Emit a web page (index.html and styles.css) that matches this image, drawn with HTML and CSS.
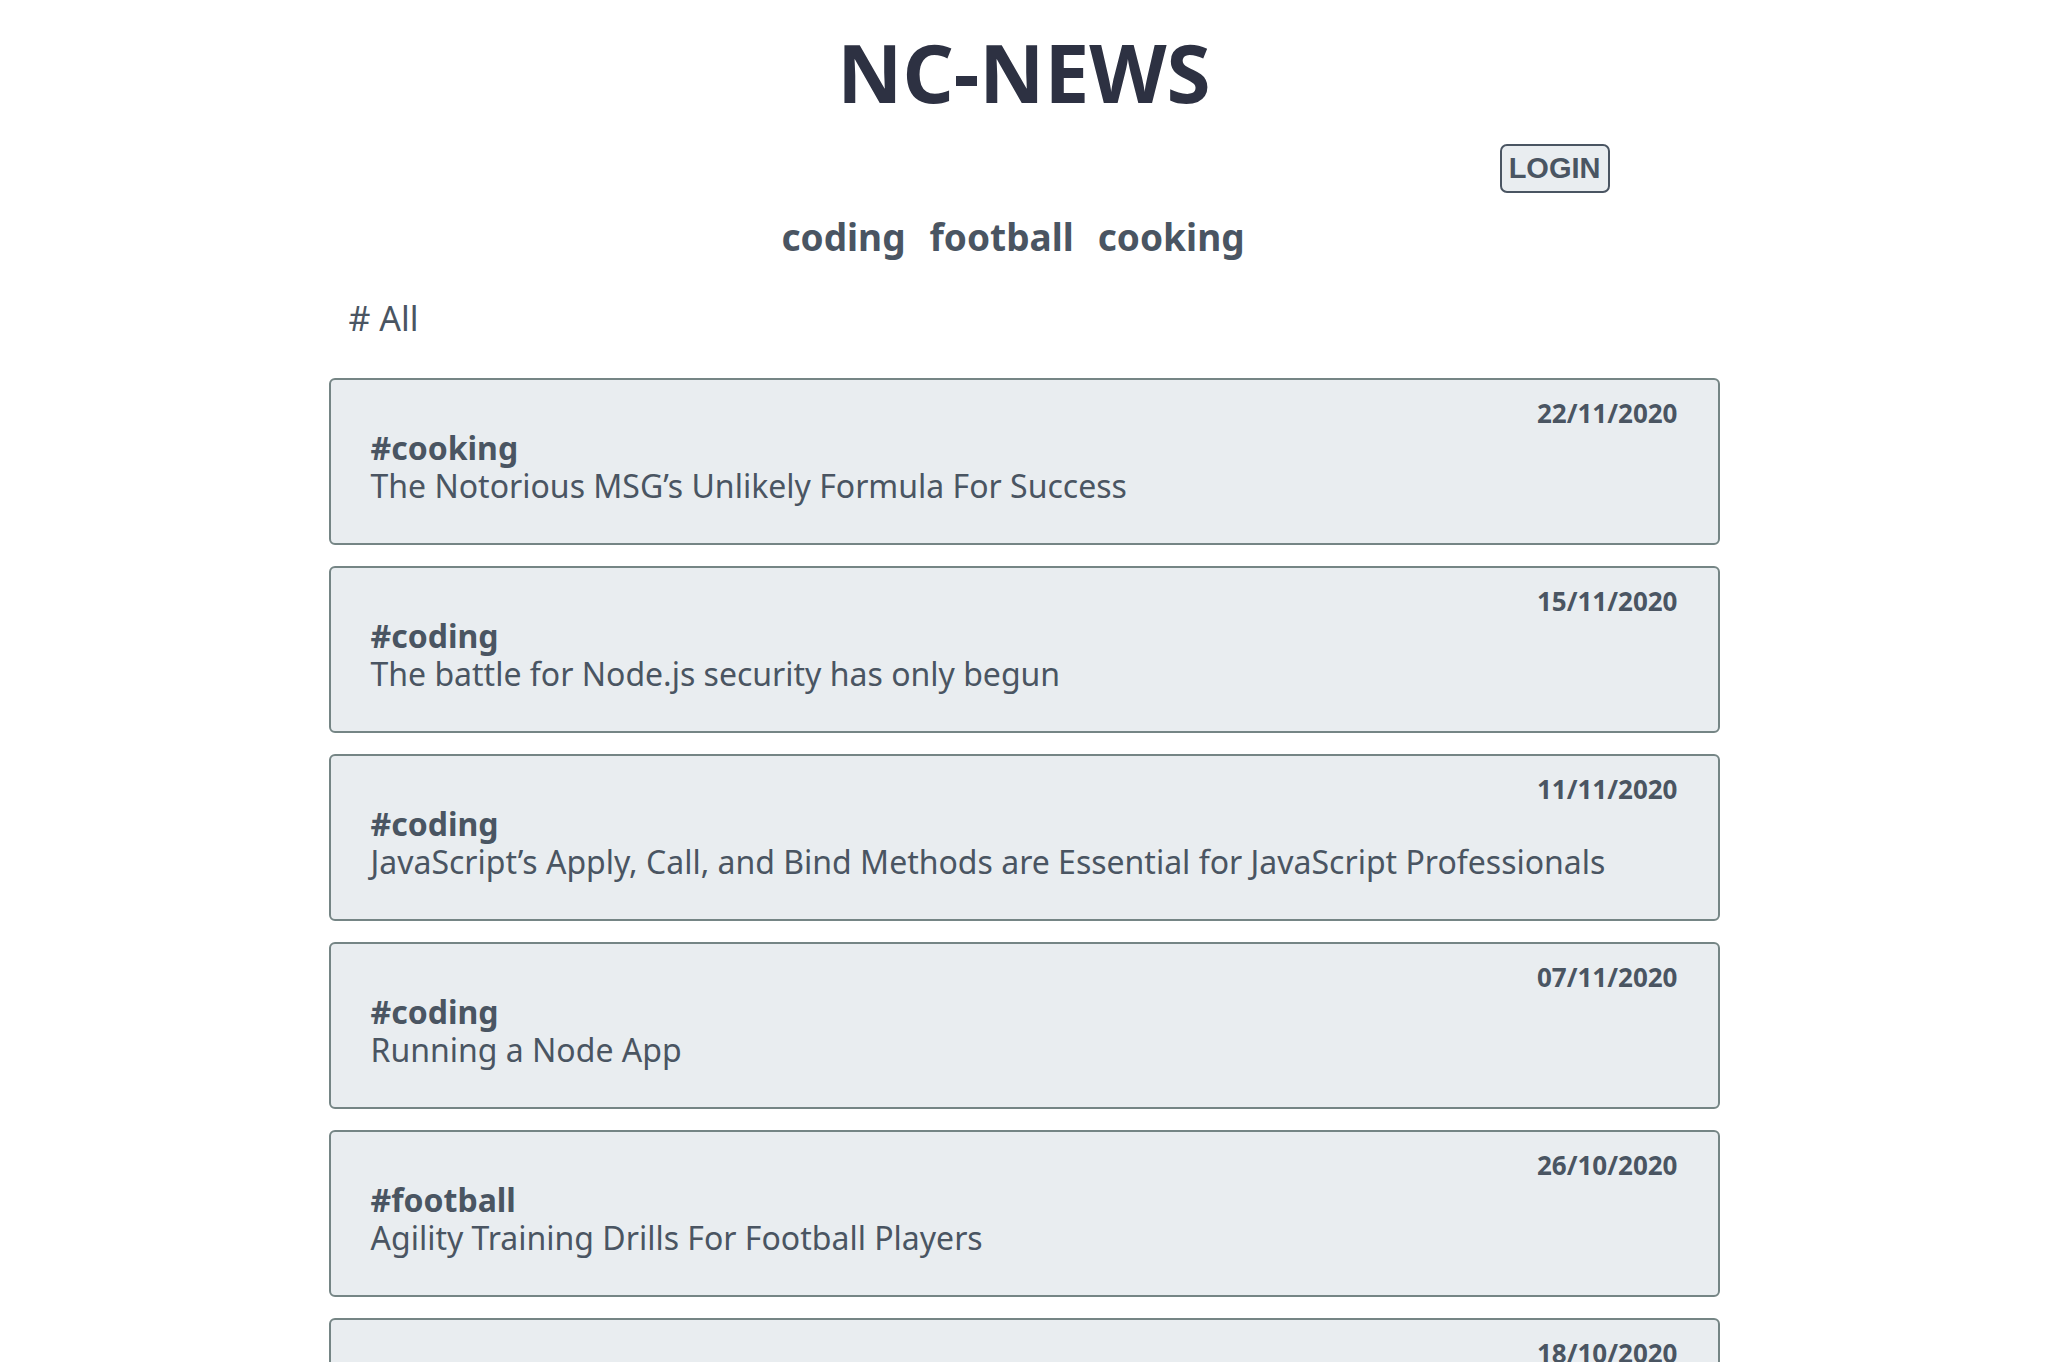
FILE: index.html
```html
<!DOCTYPE html>
<html lang="en">
<head>
<meta charset="utf-8">
<title>NC-NEWS</title>
<link rel="stylesheet" href="styles.css">
</head>
<body>
<div class="page">
  <header class="header">
    <h1 class="title">NC-NEWS</h1>
    <div class="login-row">
      <button class="login-btn">LOGIN</button>
    </div>
    <nav class="topics">
      <a class="topic" href="#">coding</a>
      <a class="topic" href="#">football</a>
      <a class="topic" href="#">cooking</a>
    </nav>
  </header>
  <main class="content">
    <h2 class="current-topic"># All</h2>
    <ul class="articles">
      <li class="card">
        <div class="card-date">22/11/2020</div>
        <div class="card-topic">#cooking</div>
        <div class="card-title">The Notorious MSG’s Unlikely Formula For Success</div>
      </li>
      <li class="card">
        <div class="card-date">15/11/2020</div>
        <div class="card-topic">#coding</div>
        <div class="card-title">The battle for Node.js security has only begun</div>
      </li>
      <li class="card">
        <div class="card-date">11/11/2020</div>
        <div class="card-topic">#coding</div>
        <div class="card-title">JavaScript’s Apply, Call, and Bind Methods are Essential for JavaScript Professionals</div>
      </li>
      <li class="card">
        <div class="card-date">07/11/2020</div>
        <div class="card-topic">#coding</div>
        <div class="card-title">Running a Node App</div>
      </li>
      <li class="card">
        <div class="card-date">26/10/2020</div>
        <div class="card-topic">#football</div>
        <div class="card-title">Agility Training Drills For Football Players</div>
      </li>
      <li class="card">
        <div class="card-date">18/10/2020</div>
        <div class="card-topic">#cooking</div>
        <div class="card-title">Thanksgiving Recipes</div>
      </li>
    </ul>
  </main>
</div>
</body>
</html>
```

FILE: styles.css
```css
* {
  box-sizing: border-box;
}

html, body {
  margin: 0;
  padding: 0;
  background: #ffffff;
}

body {
  font-family: "Noto Sans", "Open Sans", sans-serif;
  color: #4a5562;
}

.page {
  width: 1391px;
  margin: 0 auto;
}

.header {
  display: flex;
  flex-direction: column;
  align-items: center;
}

.title {
  margin: 24px 0 0;
  font-size: 80px;
  line-height: 96px;
  font-weight: 700;
  color: #2d3142;
}

.login-row {
  align-self: stretch;
  display: flex;
  justify-content: flex-end;
  padding-right: 110px;
  margin-top: 24px;
}

.login-btn {
  font-family: "Liberation Sans", Arial, sans-serif;
  font-weight: 700;
  font-size: 29px;
  line-height: 45px;
  height: 49px;
  padding: 0 7px;
  color: #4a5562;
  background: #e9edf0;
  border: 2px solid #4a5562;
  border-radius: 7px;
}

.topics {
  display: flex;
  gap: 24px;
  margin-top: 19px;
  padding-right: 22px;
}

.topic {
  font-size: 37px;
  font-weight: 700;
  line-height: 50px;
  color: #4a5562;
  text-decoration: none;
}

.content {
  margin-top: 33px;
}

.current-topic {
  margin: 0;
  padding-left: 20px;
  font-size: 34px;
  font-weight: 400;
  line-height: 46px;
  color: #4a5562;
}

.articles {
  list-style: none;
  margin: 37px 0 0;
  padding: 0;
  display: flex;
  flex-direction: column;
  gap: 21px;
}

.card {
  height: 167px;
  background: #e9edf0;
  border: 2px solid #758585;
  border-radius: 6px;
  padding: 18px 40px 0;
  display: flex;
  flex-direction: column;
}

.card-date {
  align-self: flex-end;
  font-size: 26px;
  font-weight: 700;
  line-height: 31px;
  color: #4a5562;
}

.card-topic {
  font-size: 32px;
  font-weight: 700;
  line-height: 38px;
}

.card-title {
  font-size: 32px;
  font-weight: 400;
  line-height: 38px;
}
```
